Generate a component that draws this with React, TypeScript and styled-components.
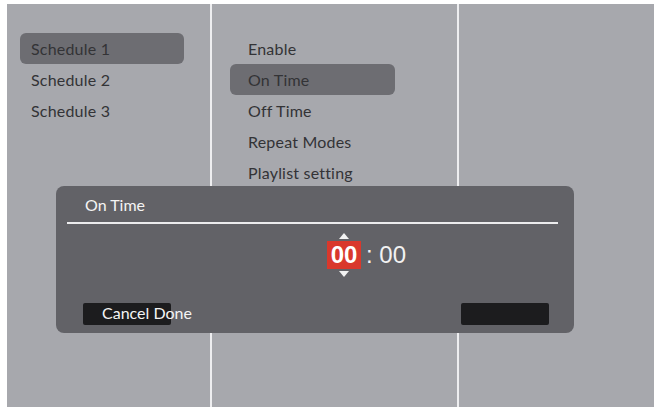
import React, { useState } from 'react';
import styled, { createGlobalStyle } from 'styled-components';

const GlobalStyle = createGlobalStyle`
    html, body {
        margin: 0;
        padding: 0;
        background: #ffffff;
    }
    body {
        font-family: Lato, "Open Sans", "Liberation Sans", sans-serif;
    }
`;

const Page = styled.div`
    width: 654px;
    height: 407px;
    padding: 4px 0 0 7px;
    box-sizing: border-box;
    background: #ffffff;
    overflow: hidden;
`;

const Screen = styled.div`
    position: relative;
    width: 647px;
    height: 403px;
    background: #a7a8ad;
    display: grid;
    grid-template-columns: 203px 247px 1fr;
`;

const Column = styled.div<{ $padLeft: number; $divider?: boolean }>`
    display: flex;
    flex-direction: column;
    padding: 29px 0 0 ${p => p.$padLeft}px;
    border-left: ${p => (p.$divider ? '2px solid #eeeef0' : 'none')};
`;

const MenuItem = styled.div<{ $active?: boolean; $width: number; $indent: number }>`
    width: ${p => p.$width}px;
    height: 31px;
    box-sizing: border-box;
    display: flex;
    align-items: center;
    padding-left: ${p => p.$indent}px;
    border-radius: 6px;
    background: ${p => (p.$active ? '#6d6d72' : 'transparent')};
    color: #333336;
    font-size: 16px;
    letter-spacing: 0.2px;
`;

const Dialog = styled.div`
    position: absolute;
    left: 49px;
    top: 182px;
    width: 518px;
    height: 147px;
    border-radius: 8px;
    background: #626267;
    display: flex;
    flex-direction: column;
    padding: 0 16px 8px 11px;
    box-sizing: border-box;
`;

const DialogTitle = styled.div`
    color: #f4f4f4;
    font-size: 16px;
    padding: 9px 0 0 18px;
    height: 27px;
`;

const Rule = styled.div`
    height: 2px;
    background: #ececee;
`;

const TimeRow = styled.div`
    display: flex;
    justify-content: center;
    align-items: center;
    padding: 5px 0 0 108px;
    height: 52px;
`;

const Spinner = styled.div`
    display: flex;
    flex-direction: column;
    align-items: center;
    gap: 2px;
`;

const Arrow = styled.svg`
    display: block;
`;

const HourBox = styled.div`
    width: 34px;
    height: 28px;
    background: #d9382c;
    color: #ffffff;
    font-family: "Liberation Sans", Arial, sans-serif;
    font-weight: bold;
    font-size: 24px;
    display: flex;
    align-items: center;
    justify-content: center;
`;

const Minutes = styled.div`
    color: #f2f2f2;
    font-family: "Liberation Sans", Arial, sans-serif;
    font-size: 24px;
    margin-left: 5px;
    white-space: pre;
`;

const ButtonRow = styled.div`
    display: flex;
    justify-content: space-between;
    align-items: center;
    margin-top: 22px;
    padding: 0 9px 0 16px;
`;

const DarkButton = styled.div<{ $width: number }>`
    width: ${p => p.$width}px;
    height: 22px;
    background: #1c1c1e;
    border-radius: 2px;
    color: #f4f4f4;
    font-size: 16px;
    display: flex;
    align-items: center;
    padding: 0 0 3px 19px;
    box-sizing: border-box;
    white-space: nowrap;
`;

const schedules = ['Schedule 1', 'Schedule 2', 'Schedule 3'];
const options = ['Enable', 'On Time', 'Off Time', 'Repeat Modes', 'Playlist setting'];

const App = () => {
    const [schedule] = useState(0);
    const [option] = useState(1);

    return (
        <>
            <GlobalStyle />
            <Page>
                <Screen>
                    <Column $padLeft={13}>
                        {schedules.map((s, i) => (
                            <MenuItem key={s} $active={i === schedule} $width={164} $indent={11}>
                                {s}
                            </MenuItem>
                        ))}
                    </Column>
                    <Column $padLeft={18} $divider>
                        {options.map((o, i) => (
                            <MenuItem key={o} $active={i === option} $width={165} $indent={18}>
                                {o}
                            </MenuItem>
                        ))}
                    </Column>
                    <Column $padLeft={0} $divider />

                    <Dialog>
                        <DialogTitle>On Time</DialogTitle>
                        <Rule />
                        <TimeRow>
                            <Spinner>
                                <Arrow width="10" height="6" viewBox="0 0 10 6">
                                    <polygon points="5,0 10,6 0,6" fill="#f2f2f2" />
                                </Arrow>
                                <HourBox>00</HourBox>
                                <Arrow width="10" height="6" viewBox="0 0 10 6">
                                    <polygon points="0,0 10,0 5,6" fill="#f2f2f2" />
                                </Arrow>
                            </Spinner>
                            <Minutes>: 00</Minutes>
                        </TimeRow>
                        <ButtonRow>
                            <DarkButton $width={88}>Cancel Done</DarkButton>
                            <DarkButton $width={88} />
                        </ButtonRow>
                    </Dialog>
                </Screen>
            </Page>
        </>
    );
};

export default App;
